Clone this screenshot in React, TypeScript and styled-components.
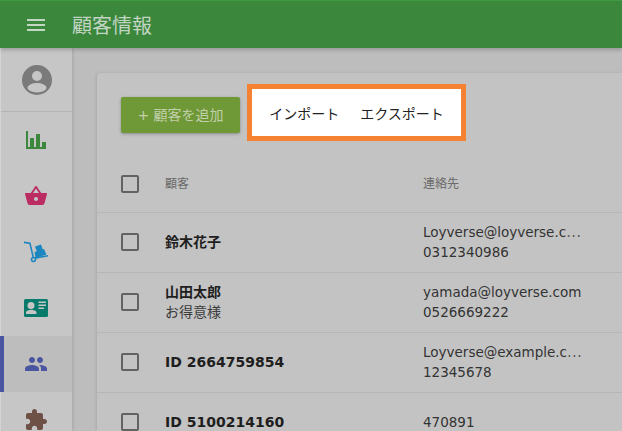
import React from 'react';
import styled, { createGlobalStyle } from 'styled-components';

const GlobalStyle = createGlobalStyle`
    html, body {
        margin: 0;
        padding: 0;
        height: 100%;
        overflow: hidden;
        background: #bdbdbd;
        font-family: "DejaVu Sans", "Noto Sans CJK JP", sans-serif;
    }
`;

const Page = styled.div`
    width: 622px;
    height: 431px;
    display: flex;
    flex-direction: column;
    overflow: hidden;
`;

const Header = styled.header`
    height: 48px;
    flex: none;
    display: flex;
    align-items: center;
    background: #3b873c;
    border-top: 1px solid #3f9a42;
    box-sizing: border-box;
    box-shadow: 0 2px 4px rgba(0, 0, 0, 0.2);
    position: relative;
    z-index: 2;
`;

const Burger = styled.svg`
    width: 24px;
    height: 24px;
    margin-left: 24px;
    fill: #c4d6c4;
`;

const Title = styled.h1`
    margin: 0 0 0 24px;
    font-size: 20px;
    font-weight: 400;
    color: #c2d4c2;
    font-family: "Noto Sans CJK JP", sans-serif;
`;

const Body = styled.div`
    flex: 1;
    display: flex;
    min-height: 0;
`;

const Sidebar = styled.nav`
    width: 72px;
    flex: none;
    background: #c6c6c6;
    border-left: 1px solid #d4d4d4;
    box-sizing: border-box;
    box-shadow: 1px 0 3px rgba(0, 0, 0, 0.12);
`;

const AvatarRow = styled.div`
    height: 64px;
    display: flex;
    align-items: center;
    justify-content: center;
    border-bottom: 1px solid #b4b4b4;
    box-sizing: border-box;
`;

const NavItem = styled.div<{ $active?: boolean }>`
    height: 56px;
    display: flex;
    align-items: center;
    justify-content: center;
    margin-left: -1px;
    background: ${p => (p.$active ? '#bdbdbd' : 'transparent')};
    border-left: 4px solid ${p => (p.$active ? '#4a559f' : 'transparent')};
    padding-right: 4px;
`;

const Main = styled.main`
    flex: 1;
    min-width: 0;
    padding: 25px 0 0 25px;
`;

const Card = styled.section`
    background: #c3c3c3;
    border-radius: 3px 0 0 0;
    box-shadow: -1px 0 3px rgba(0, 0, 0, 0.1);
    height: 100%;
`;

const Toolbar = styled.div`
    height: 80px;
    display: flex;
    align-items: flex-start;
    padding-left: 24px;
    gap: 7px;
`;

const AddButton = styled.div`
    width: 119px;
    height: 36px;
    margin-top: 24px;
    padding-bottom: 2px;
    box-sizing: border-box;
    display: flex;
    align-items: center;
    justify-content: center;
    background: #6f9837;
    border-radius: 2px;
    color: #c2d0ac;
    font-size: 14px;
    white-space: pre;
    box-shadow: 0 1px 3px rgba(0, 0, 0, 0.3);
`;

const Highlight = styled.div`
    width: 219px;
    height: 57px;
    margin-top: 11px;
    box-sizing: border-box;
    border: 5px solid #f58233;
    background: #fff;
    display: flex;
    align-items: center;
    justify-content: center;
    gap: 21px;
    color: #222;
    font-size: 14px;
    font-family: "Noto Sans CJK JP", sans-serif;
`;

const Row = styled.div`
    display: grid;
    grid-template-columns: 68px 258px 1fr;
    align-items: center;
    height: 60px;
    box-sizing: border-box;
    border-bottom: 1px solid #b6b6b6;
`;

const Check = styled.span<{ $head?: boolean }>`
    width: 14px;
    height: 14px;
    margin-left: 24px;
    margin-top: ${p => (p.$head ? '2px' : '0')};
    margin-bottom: ${p => (p.$head ? '0' : '1px')};
    border: 2px solid #626262;
    border-radius: 2px;
    display: block;
`;

const HeadLabel = styled.span`
    font-size: 12px;
    color: #696969;
    font-family: "Noto Sans CJK JP", sans-serif;
`;

const NameCell = styled.div`
    padding-bottom: 2px;
`;

const Name = styled.div`
    font-size: 14px;
    line-height: 20px;
    font-weight: 700;
    color: #1e1e1e;
`;

const Note = styled.div`
    font-size: 14px;
    line-height: 20px;
    color: #3c3c3c;
`;

const Contact = styled.div`
    font-size: 13.5px;
    line-height: 20px;
    color: #333;
    padding-bottom: 2px;
    white-space: nowrap;
`;

const Dots = styled.span`
    font-family: "Noto Sans CJK JP", sans-serif;
`;

const Icon = styled.svg<{ $color: string; $size?: number }>`
    width: ${p => p.$size || 24}px;
    height: ${p => p.$size || 24}px;
    fill: ${p => p.$color};
    display: block;
`;

const customers = [
    { name: '鈴木花子', email: 'Loyverse@loyverse.c', cut: true, phone: '0312340986' },
    { name: '山田太郎', note: 'お得意様', email: 'yamada@loyverse.com', phone: '0526669222' },
    { name: 'ID 2664759854', email: 'Loyverse@example.c', cut: true, phone: '12345678' },
    { name: 'ID 5100214160', phone: '470891' },
];

const App: React.FC = () => {
    return (
        <Page>
            <GlobalStyle />
            <Header>
                <Burger viewBox="0 0 24 24">
                    <path d="M3 18h18v-2H3v2zm0-5h18v-2H3v2zm0-7v2h18V6H3z" />
                </Burger>
                <Title>顧客情報</Title>
            </Header>
            <Body>
                <Sidebar>
                    <AvatarRow>
                        <Icon $color="#7a7a7a" $size={30} viewBox="0 0 30 30">
                            <path
                                fillRule="evenodd"
                                d="M15 0a15 15 0 1 1 0 30a15 15 0 1 1 0-30zM15 6a5 5 0 1 0 0 10a5 5 0 1 0 0-10zM15 18a9.500 4.700 0 1 0 0 9.400a9.500 4.700 0 1 0 0-9.400z"
                            />
                        </Icon>
                    </AvatarRow>
                    <NavItem>
                        <Icon $color="#3b873c" viewBox="0 0 24 24">
                            <path d="M2 3h2v16h18v2H2zM6 10h4v9H6zM12 6h4v13h-4zM18 14h4v5h-4z" />
                        </Icon>
                    </NavItem>
                    <NavItem>
                        <Icon $color="#bb2d62" viewBox="0 0 24 24">
                            <path d="M17.21 9l-4.38-6.56c-.19-.28-.51-.42-.83-.42-.32 0-.64.14-.83.43L6.79 9H2c-.55 0-1 .45-1 1 0 .09.01.18.04.27l2.54 9.27c.23.84 1 1.46 1.92 1.46h13c.92 0 1.69-.62 1.93-1.46l2.54-9.27L23 10c0-.55-.45-1-1-1h-4.79zM9 9l3-4.4L15 9H9zm3 8c-1.1 0-2-.9-2-2s.9-2 2-2 2 .9 2 2-.9 2-2 2z" />
                        </Icon>
                    </NavItem>
                    <NavItem>
                        <Icon $color="#1c86c0" viewBox="0 0 24 24">
                            <path d="M0 1.500L6.500 2.500 10 17l-1.500.5L5.300 4 0 3.200z" />
                            <path d="M11 6.500l6-2 1.800 5-6 2zM10.500 12l9.500-3 2.400 5.500-10.900 3.400z" />
                            <path d="M10.500 17.200L24 15l.3 1.500L11 19z" />
                            <path
                                fillRule="evenodd"
                                d="M9.500 16.700a2.800 2.800 0 1 1 0 5.600a2.800 2.800 0 1 1 0-5.600zm0 1.600a1.200 1.200 0 1 0 0 2.400a1.200 1.200 0 1 0 0-2.400z"
                            />
                        </Icon>
                    </NavItem>
                    <NavItem>
                        <Icon $color="#087a6b" viewBox="0 0 24 24">
                            <path
                                fillRule="evenodd"
                                d="M1.500 3h21A1.500 1.500 0 0 1 24 4.500v15a1.500 1.500 0 0 1-1.500 1.500h-21A1.500 1.500 0 0 1 0 19.500v-15A1.500 1.500 0 0 1 1.500 3zM7 6a3.500 3.500 0 1 0 0 7a3.500 3.500 0 0 0 0-7zM2 18h10.500v-1.500c0-1.900-3.500-2.800-5.200-2.800S2 14.600 2 16.500zM14.500 5.500V7H22V5.500zM14.500 8.500V10H22V8.500zM14.500 11.500V13H20v-1.500z"
                            />
                        </Icon>
                    </NavItem>
                    <NavItem $active>
                        <Icon $color="#4a559f" viewBox="0 0 24 24">
                            <path d="M16 11c1.660 0 2.990-1.340 2.990-3S17.660 5 16 5c-1.660 0-3 1.340-3 3s1.340 3 3 3zm-8 0c1.660 0 2.990-1.340 2.990-3S9.660 5 8 5C6.340 5 5 6.340 5 8s1.340 3 3 3zm0 2c-2.330 0-7 1.170-7 3.500V19h14v-2.500c0-2.330-4.670-3.500-7-3.500zm8 0c-.29 0-.62.02-.97.05 1.160.84 1.970 1.970 1.970 3.450V19h6v-2.500c0-2.330-4.670-3.500-7-3.500z" />
                        </Icon>
                    </NavItem>
                    <NavItem>
                        <Icon $color="#6d5146" viewBox="0 0 24 24">
                            <path d="M20.500 11H19V7c0-1.100-.9-2-2-2h-4V3.500C13 2.120 11.880 1 10.500 1S8 2.120 8 3.500V5H4c-1.100 0-1.990.9-1.990 2v3.800H3.500c1.490 0 2.700 1.210 2.700 2.700s-1.210 2.700-2.700 2.700H2V20c0 1.100.9 2 2 2h3.800v-1.500c0-1.490 1.210-2.700 2.700-2.700 1.490 0 2.700 1.210 2.700 2.700V22H17c1.100 0 2-.9 2-2v-4h1.500c1.380 0 2.500-1.120 2.500-2.500S21.880 11 20.500 11z" />
                        </Icon>
                    </NavItem>
                </Sidebar>
                <Main>
                    <Card>
                        <Toolbar>
                            <AddButton>+ 顧客を追加</AddButton>
                            <Highlight>
                                <span>インポート</span>
                                <span>エクスポート</span>
                            </Highlight>
                        </Toolbar>
                        <Row>
                            <Check $head />
                            <HeadLabel>顧客</HeadLabel>
                            <HeadLabel>連絡先</HeadLabel>
                        </Row>
                        {customers.map(c => (
                            <Row key={c.name}>
                                <Check />
                                <NameCell>
                                    <Name>{c.name}</Name>
                                    {c.note && <Note>{c.note}</Note>}
                                </NameCell>
                                <Contact>
                                    {c.email && (
                                        <div>
                                            {c.email}
                                            {c.cut && <Dots>⋯</Dots>}
                                        </div>
                                    )}
                                    <div>{c.phone}</div>
                                </Contact>
                            </Row>
                        ))}
                    </Card>
                </Main>
            </Body>
        </Page>
    );
};

export default App;
